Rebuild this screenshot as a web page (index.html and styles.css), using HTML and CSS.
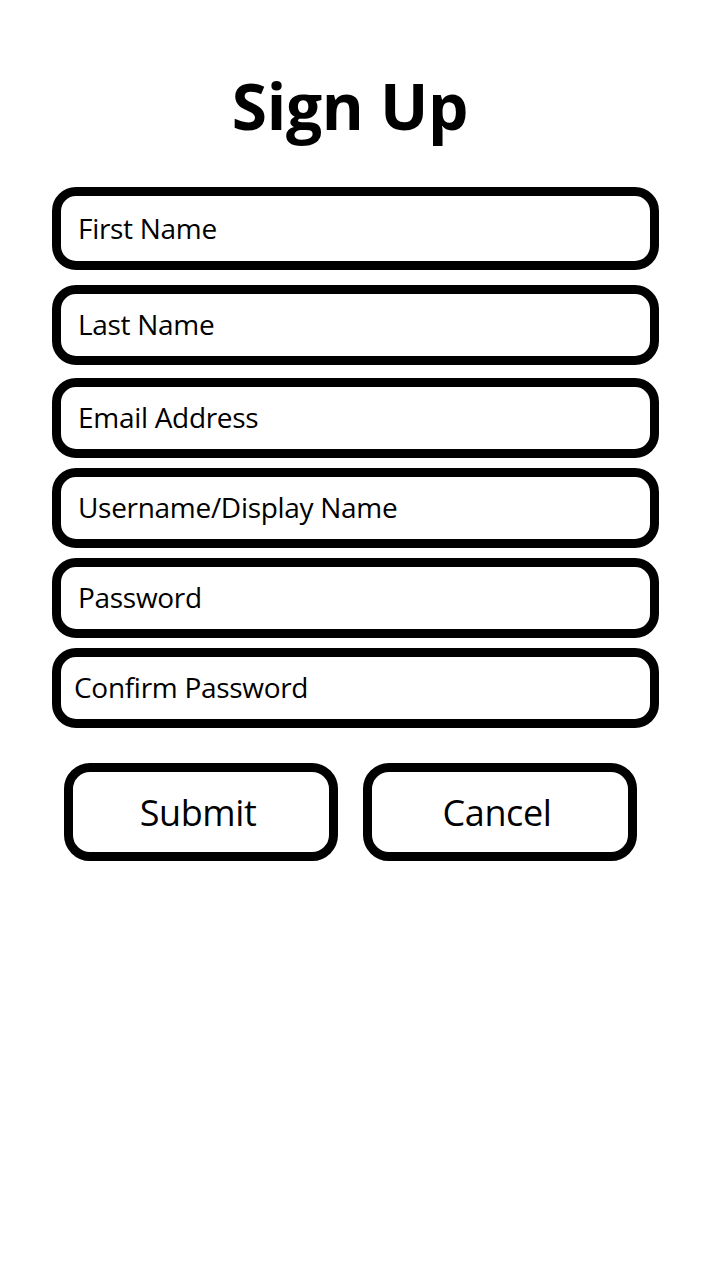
FILE: index.html
```html
<!DOCTYPE html>
<html lang="en">
<head>
<meta charset="utf-8">
<title>Sign Up</title>
<link rel="stylesheet" href="styles.css">
</head>
<body>
<main class="page">
  <h1 class="title">Sign Up</h1>
  <form class="form">
    <div class="field field-first"><span class="label">First Name</span></div>
    <div class="field field-second"><span class="label">Last Name</span></div>
    <div class="field"><span class="label">Email Address</span></div>
    <div class="field"><span class="label">Username/Display Name</span></div>
    <div class="field"><span class="label">Password</span></div>
    <div class="field"><span class="label label-tight">Confirm Password</span></div>
    <div class="actions">
      <div class="btn">Submit</div>
      <div class="btn">Cancel</div>
    </div>
  </form>
</main>
</body>
</html>
```

FILE: styles.css
```css
html, body {
  margin: 0;
  padding: 0;
  background: #ffffff;
}

body {
  font-family: "Open Sans", "Noto Sans", "Liberation Sans", sans-serif;
  color: #000;
}

.page {
  width: 720px;
  height: 1280px;
  box-sizing: border-box;
  padding-top: 66px;
}

.title {
  margin: 0;
  width: 700px;
  text-align: center;
  font-size: 64px;
  font-weight: 700;
  line-height: 80px;
  letter-spacing: -0.3px;
}

.form {
  margin: 41px 0 0 52px;
  width: 607px;
  display: flex;
  flex-direction: column;
  gap: 10px;
}

.field {
  box-sizing: border-box;
  height: 80px;
  border: 9px solid #000;
  border-radius: 24px;
  display: flex;
  align-items: center;
  padding-left: 17px;
  padding-bottom: 2px;
}

.field-first {
  height: 83px;
  margin-bottom: 5px;
}

.field-second {
  margin-bottom: 3px;
}

.label {
  font-size: 28px;
  line-height: 1;
  letter-spacing: -0.3px;
}

.label-tight {
  margin-left: -4px;
}

.actions {
  margin: 25px 0 0 12px;
  display: flex;
  gap: 25px;
}

.btn {
  box-sizing: border-box;
  width: 274px;
  height: 98px;
  border: 9px solid #000;
  border-radius: 26px;
  display: flex;
  align-items: center;
  justify-content: center;
  padding-right: 6px;
  font-size: 36px;
  letter-spacing: -0.4px;
}
```
